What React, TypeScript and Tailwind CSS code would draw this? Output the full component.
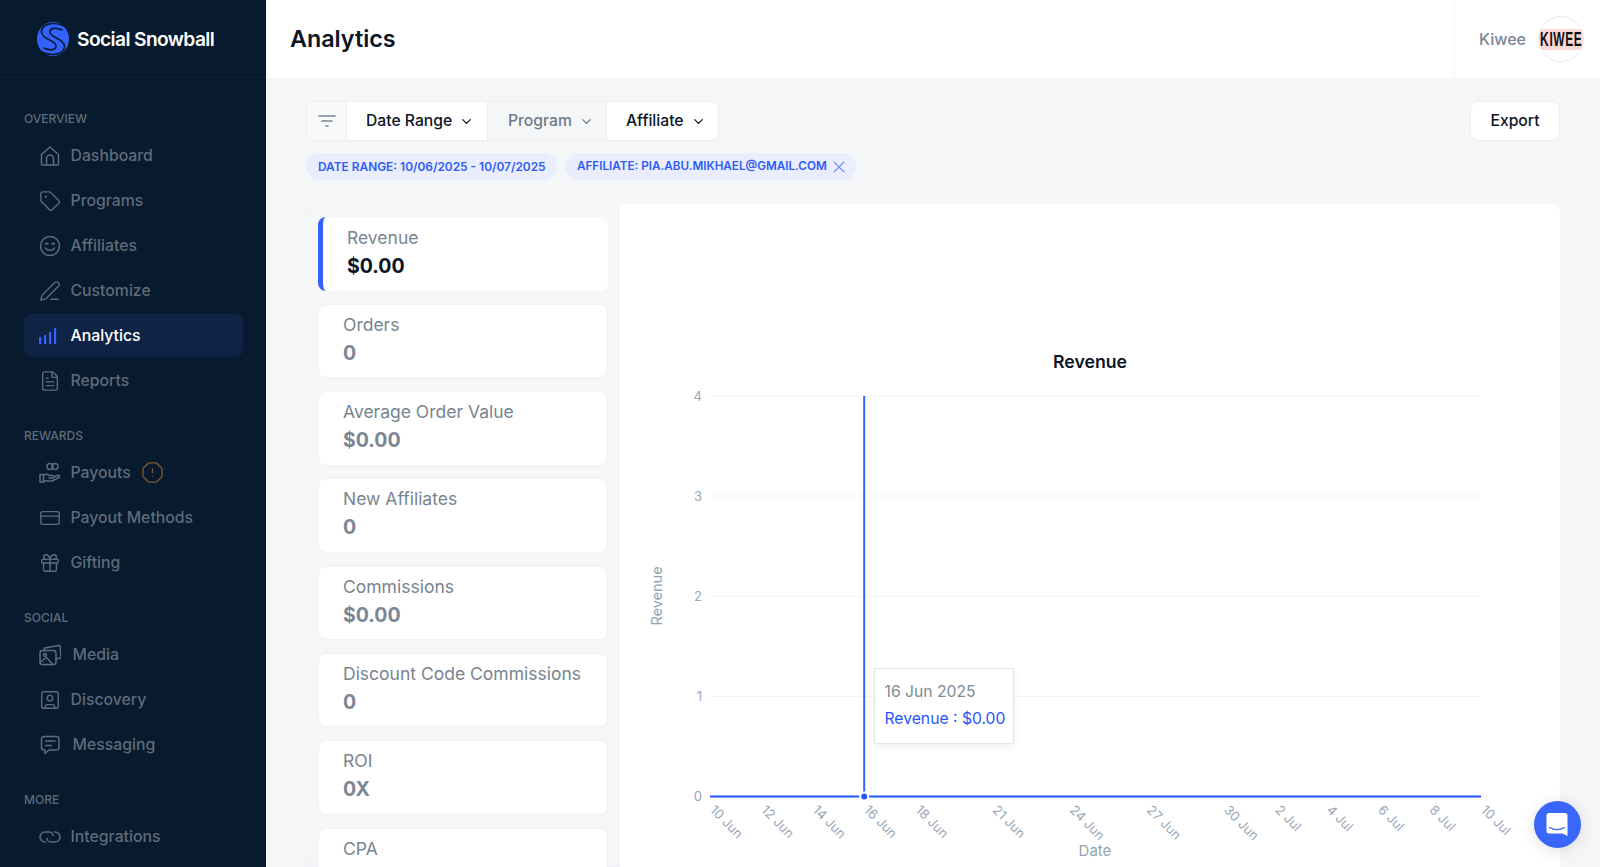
import { ChevronDown, CreditCard, FileText, Gift, OctagonAlert, PenLine, SquareUser, Tag, X } from 'lucide-react'
import type { ReactNode } from 'react'

const ICON = { size: 22, strokeWidth: 1.5 }

function Stroke({ children }: { children: ReactNode }) {
  return (
    <svg width="22" height="22" viewBox="0 0 22 22" fill="none" stroke="currentColor" strokeWidth="1.5" strokeLinejoin="round" strokeLinecap="round">
      {children}
    </svg>
  )
}

function HomeIcon() {
  return (
    <Stroke>
      <path d="M2.500 9.500 11 2l8.500 7.500V19a1 1 0 0 1-1 1h-15a1 1 0 0 1-1-1Z" />
      <path d="M7.500 20v-6.500a3.500 3.500 0 0 1 7 0V20" />
    </Stroke>
  )
}

function SmileIcon() {
  return (
    <Stroke>
      <circle cx="11" cy="11" r="9.500" />
      <path d="M6.500 9c.6-1 2-1 2.600 0M12.900 9c.6-1 2-1 2.600 0" />
      <path d="M6.500 13c1.800 3 7.200 3 9 0" />
    </Stroke>
  )
}

function BarsIcon() {
  return (
    <svg width="22" height="22" viewBox="0 0 22 22" fill="#3461ff">
      <rect x="0" y="12" width="2.200" height="7" rx="0.500" />
      <rect x="5" y="10" width="2.200" height="9" rx="0.500" />
      <rect x="10" y="7" width="2.200" height="12" rx="0.500" />
      <rect x="15" y="3" width="2.200" height="16" rx="0.500" />
    </svg>
  )
}

function PayoutIcon() {
  return (
    <Stroke>
      <circle cx="11" cy="4.500" r="3" />
      <circle cx="16" cy="4.500" r="3" />
      <path d="M1 12.500h3.500V20H1Z" />
      <path d="M4.500 13.500c2-1.500 4-1.500 5.500 0h3.500c1.600 0 1.600 2.500 0 2.500H10" />
      <path d="M4.500 19H13l7-3.500c1.200-.8.300-2.600-1.200-2.200l-4 1.700" />
    </Stroke>
  )
}

function MediaIcon() {
  return (
    <Stroke>
      <rect x="1" y="6.500" width="16" height="14" rx="2.500" />
      <path d="M5 6.500 5.500 4 20 1.500c.6-.1 1 .3 1.100.8l.9 10.700c0 .6-.3 1-.8 1.100L17 15" />
      <circle cx="6" cy="11" r="1.400" />
      <path d="m1.500 18 6-4.500 6 6.500" />
    </Stroke>
  )
}

function MessageIcon() {
  return (
    <Stroke>
      <path d="M5 2.500h12.500a2.500 2.500 0 0 1 2.500 2.500v8.500a2.500 2.500 0 0 1-2.500 2.500H10l-4 3.500V16H5a2.500 2.500 0 0 1-2.500-2.500V5A2.500 2.500 0 0 1 5 2.500Z" />
      <path d="M6.500 7h9.500M6.500 11.500h6" />
    </Stroke>
  )
}

function LinkLoops() {
  return (
    <Stroke>
      <path d="M6.500 16H6a5 5 0 0 1 0-10h4c2.500 0 4 2 4 3.500" />
      <path d="M15.500 6h.5a5 5 0 0 1 0 10h-4c-2.500 0-4-2-4-3.500" />
    </Stroke>
  )
}

function Logo() {
  return (
    <svg width="34" height="36" viewBox="0 0 34 36" fill="none" stroke="#081a2d" strokeWidth="1.600" strokeLinecap="round">
      <ellipse cx="17" cy="18" rx="16" ry="17" fill="#3461ff" stroke="none" />
      <path d="M28 5C18 0 5 3 5.500 11 6 19 20 19 20 25c0 4-6 5-12 2" />
      <path d="M6 31c10 5 23 2 22.500-6C28 17 14 17 14 11c0-4 6-5 12-2" />
    </svg>
  )
}

type NavItem = { label: string; icon: ReactNode; gap?: string; active?: boolean; badge?: boolean }
type NavGroup = { title: string; items: NavItem[] }

const NAV: NavGroup[] = [
  {
    title: 'OVERVIEW',
    items: [
      { label: 'Dashboard', icon: <HomeIcon /> },
      { label: 'Programs', icon: <Tag {...ICON} /> },
      { label: 'Affiliates', icon: <SmileIcon /> },
      { label: 'Customize', icon: <PenLine {...ICON} /> },
      { label: 'Analytics', icon: <BarsIcon />, active: true },
      { label: 'Reports', icon: <FileText {...ICON} /> },
    ],
  },
  {
    title: 'REWARDS',
    items: [
      { label: 'Payouts', icon: <PayoutIcon />, badge: true },
      { label: 'Payout Methods', icon: <CreditCard {...ICON} /> },
      { label: 'Gifting', icon: <Gift {...ICON} /> },
    ],
  },
  {
    title: 'SOCIAL',
    items: [
      { label: 'Media', icon: <MediaIcon />, gap: 'gap-3' },
      { label: 'Discovery', icon: <SquareUser {...ICON} /> },
      { label: 'Messaging', icon: <MessageIcon />, gap: 'gap-3' },
    ],
  },
  { title: 'MORE', items: [{ label: 'Integrations', icon: <LinkLoops /> }] },
]

const METRICS = [
  { label: 'Revenue', value: '$0.00', active: true },
  { label: 'Orders', value: '0' },
  { label: 'Average Order Value', value: '$0.00' },
  { label: 'New Affiliates', value: '0' },
  { label: 'Commissions', value: '$0.00' },
  { label: 'Discount Code Commissions', value: '0' },
  { label: 'ROI', value: '0X' },
  { label: 'CPA', value: '$0.00' },
]

// x position of each date tick on the axis, page coords
const TICKS = [
  ['10 Jun', 710], ['12 Jun', 761.4], ['14 Jun', 812.8], ['16 Jun', 864.2], ['18 Jun', 915.6],
  ['21 Jun', 992.7], ['24 Jun', 1069.8], ['27 Jun', 1146.9], ['30 Jun', 1224], ['2 Jul', 1275.4],
  ['4 Jul', 1326.8], ['6 Jul', 1378.2], ['8 Jul', 1429.6], ['10 Jul', 1481],
] as const

const GRID = [
  ['4', 396], ['3', 496], ['2', 596.5], ['1', 696.5],
] as const

function Sidebar() {
  return (
    <aside className="flex w-[266px] shrink-0 flex-col overflow-hidden bg-[#081a2d]">
      <div className="flex h-[78px] shrink-0 items-center gap-[7px] border-b border-[#0e2135] pl-[36px]">
        <Logo />
        <span className="pt-[1px] text-[19.2px] font-semibold tracking-[-0.6px] text-white">Social Snowball</span>
      </div>
      <nav className="px-[24px] pt-[32.5px]">
        {NAV.map((g, i) => (
          <div key={g.title} className={i > 0 ? 'mt-[25.5px]' : ''}>
            <div className="mb-[7.5px] h-[16px] text-[12px] leading-[16px] font-medium text-[#5f6b7b]">{g.title}</div>
            {g.items.map((it) => (
              <div
                key={it.label}
                className={`mb-[2px] flex h-[43px] w-[219px] items-center rounded-[8px] pl-[14.5px] text-[15.8px] font-medium ${it.gap ?? 'gap-2.5'} ${it.active ? 'bg-[#0f2344] text-white' : 'text-[#5f6b7b]'}`}
              >
                {it.icon}
                <span>{it.label}</span>
                {it.badge && <OctagonAlert size={23} strokeWidth={1.4} className="text-[#7a5a30]" />}
              </div>
            ))}
          </div>
        ))}
      </nav>
    </aside>
  )
}

function Header() {
  return (
    <header className="flex h-[78px] shrink-0 items-center justify-between bg-white pl-[24px]">
      <h1 className="text-[23.3px] font-semibold text-[#0b1526]">Analytics</h1>
      <div className="flex h-full items-center border-l border-[#f6f7f9] pr-[16px] pl-[24px]">
        <span className="text-[16px] font-medium text-[#7b8794]">Kiwee</span>
        <div className="ml-[12px] flex h-[46px] w-[46px] items-center justify-center overflow-hidden rounded-full border border-[#e8eaef] bg-white">
          <div className="flex h-[21px] w-full shrink-0 items-center justify-center bg-[#fbd7d6]">
            <span className="scale-x-[0.6] font-['Liberation_Sans'] text-[20px] font-bold tracking-[1px] whitespace-nowrap text-[#111]">KIWEE</span>
          </div>
        </div>
      </div>
    </header>
  )
}

function FilterBar() {
  return (
    <div className="flex items-start justify-between">
      <div className="flex h-[40px] items-stretch overflow-hidden rounded-[8px] border border-[#eceef2] bg-white pt-0 text-[15.7px] font-medium">
        <div className="flex w-[40px] items-center justify-center border-r border-[#eceef2] bg-[#f8f9fa] text-[#7b8794]">
          <svg width="18" height="14" viewBox="0 0 18 14" fill="none" stroke="currentColor" strokeWidth="1.6" strokeLinecap="round">
            <path d="M1 2h16M4 7h10M8 12h2" />
          </svg>
        </div>
        <div className="flex w-[141px] items-center gap-[7px] border-r border-[#eceef2] pl-[19px] text-[#0b1526]">
          Date Range <ChevronDown size={15} strokeWidth={2} />
        </div>
        <div className="flex w-[119px] items-center gap-[7px] border-r border-[#eceef2] bg-[#f5f6f8] pl-[20px] text-[#6e7a87]">
          Program <ChevronDown size={15} strokeWidth={2} />
        </div>
        <div className="flex w-[111px] items-center gap-[7px] pl-[19px] text-[#0b1526]">
          Affiliate <ChevronDown size={15} strokeWidth={2} />
        </div>
      </div>
      <div className="flex h-[40px] w-[90px] items-center justify-center rounded-[8px] border border-[#eceef2] bg-white text-[15.7px] font-medium text-[#0b1526]">
        Export
      </div>
    </div>
  )
}

function Chips() {
  const chip = 'flex h-[27px] items-center rounded-full bg-[#e9edfd] pt-[1px] font-semibold whitespace-nowrap text-[#2f5bf5]'
  return (
    <div className="mt-[12px] flex gap-[8px]">
      <div className={`${chip} w-[251px] pl-[12px] text-[11.9px]`}>DATE RANGE: 10/06/2025 - 10/07/2025</div>
      <div className={`${chip} w-[291px] pl-[12px] text-[11.7px]`}>
        AFFILIATE: PIA.ABU.MIKHAEL@GMAIL.COM
        <X size={20} strokeWidth={1.3} className="ml-[2px] text-[#6f8df5]" />
      </div>
    </div>
  )
}

function MetricList() {
  return (
    <div className="flex w-[314px] shrink-0 flex-col gap-[12.8px] rounded-l-[8px] border border-r-0 border-[#eff1f4] pt-[11.5px] pr-[12px] pl-[11px]">
      {METRICS.map((m) => (
        <div
          key={m.label}
          className={`h-[74.5px] shrink-0 rounded-[8px] bg-white pl-[24px] ${m.active ? 'border-l-[5px] border-[#3461ff] pt-[9px]' : 'border border-[#f0f1f4] pt-[8px]'}`}
        >
          <div className="text-[17.5px] leading-[24px] text-[#78848f]">{m.label}</div>
          <div className={`mt-[2px] text-[19.5px] leading-[28px] font-bold ${m.active ? 'text-[#0b1526]' : 'text-[#7b8794]'}`}>{m.value}</div>
        </div>
      ))}
    </div>
  )
}

function RevenueChart() {
  return (
    <div className="relative flex-1 overflow-hidden rounded-tr-[8px] bg-white">
      <svg viewBox="620 204 940 663" className="block h-[663px] w-[940px]" fontFamily="Inter, sans-serif">
        <text x="1090" y="368" textAnchor="middle" fontSize="17.7" fontWeight="600" fill="#0b1526">Revenue</text>
        {GRID.map(([label, y]) => (
          <g key={label}>
            <line x1="710" x2="1481" y1={y} y2={y} stroke="#f1f3f5" />
            <text x="702" y={y + 4.5} textAnchor="end" fontSize="13" fill="#9aa7b6">{label}</text>
          </g>
        ))}
        <text x="702" y="801" textAnchor="end" fontSize="13" fill="#9aa7b6">0</text>
        <line x1="710" x2="1481" y1="796.5" y2="796.5" stroke="#1f55ff" strokeWidth="2" />
        <line x1="864.2" x2="864.2" y1="396" y2="796" stroke="#3461ff" strokeWidth="2" />
        <circle cx="864.2" cy="796.5" r="4" fill="#1f55ff" stroke="#fff" strokeWidth="2" />
        {TICKS.map(([label, x]) => (
          <text key={label} x={x + 2} y="812" fontSize="13" fill="#9aa7b6" transform={`rotate(45 ${x + 2} 808)`}>{label}</text>
        ))}
        <text x="1095" y="856" textAnchor="middle" fontSize="15" fill="#94a3b3">Date</text>
        <text x="658" y="596" textAnchor="middle" fontSize="14.5" fill="#94a3b3" transform="rotate(-90 658 596)" dominantBaseline="middle">Revenue</text>
      </svg>
      <div className="absolute top-[464px] left-[254px] flex h-[76px] w-[140px] flex-col border border-[#e6e6e6] bg-white pl-[9.5px] text-[15.7px] shadow-[0_2px_6px_rgba(0,0,0,0.07)]">
        <div className="mt-[10.5px] leading-[24px] text-[#808a94]">16 Jun 2025</div>
        <div className="mt-[3px] leading-[24px] text-[#1f55ff]">Revenue : $0.00</div>
      </div>
    </div>
  )
}

export default function App() {
  return (
    <div className="relative flex h-[867px] w-[1600px] overflow-hidden bg-[#f5f6f8] font-['Inter',sans-serif]">
      <Sidebar />
      <main className="flex min-w-0 flex-1 flex-col">
        <Header />
        <div className="flex min-h-0 flex-1 flex-col px-[40px] pt-[23px]">
          <FilterBar />
          <Chips />
          <div className="mt-[24px] flex min-h-0 flex-1">
            <MetricList />
            <RevenueChart />
          </div>
        </div>
      </main>
      <div className="absolute top-[800.5px] left-[1533.5px] flex h-[47px] w-[47px] items-center justify-center rounded-full bg-[#3a66fb] shadow-[0_2px_16px_rgba(0,0,0,0.12)]">
        <svg width="22" height="25" viewBox="0 0 22 25" fill="#fff">
          <path d="M3 1h16a2.500 2.500 0 0 1 2.500 2.500V24l-5-2.500H3A2.500 2.500 0 0 1 .5 19V3.500A2.500 2.500 0 0 1 3 1Z" />
          <path d="M3.500 15.500c4.500 2.500 10.500 2.500 15 0" fill="none" stroke="#3a66fb" strokeWidth="1.3" strokeLinecap="round" />
        </svg>
      </div>
    </div>
  )
}
